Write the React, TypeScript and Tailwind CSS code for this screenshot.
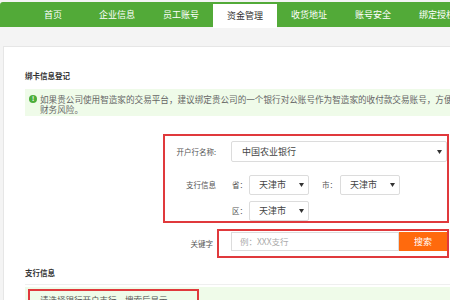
const FONT = { fontFamily: '"Noto Sans CJK SC", "Noto Sans", sans-serif' };

const tabs = ["首页", "企业信息", "员工账号", "资金管理", "收货地址", "账号安全", "绑定授权"];

function Caret() {
  return (
    <svg width="5" height="4" viewBox="0 0 5 4" className="shrink-0">
      <path d="M0 0h5L2.5 4z" fill="#333" />
    </svg>
  );
}

function Select({ value, className }: { value: string; className: string }) {
  return (
    <div
      className={`flex items-center justify-between bg-white border border-[#dcdcdc] rounded-[2px] pl-[9px] pr-[4px] text-[9px] text-[#444] ${className}`}
    >
      <span>{value}</span>
      <Caret />
    </div>
  );
}

export default function App() {
  return (
    <div className="w-[450px] h-[300px] overflow-hidden bg-[#f4f4f4] pt-[2px]" style={FONT}>
      {/* top nav */}
      <div className="h-[25px] bg-[#52aa38] rounded-tl-[3px] flex items-end pl-[21px] whitespace-nowrap">
        {tabs.map((t) =>
          t === "资金管理" ? (
            <div
              key={t}
              className="w-[64px] h-[24px] shrink-0 bg-white text-[#333] text-[9px] flex items-center justify-center translate-y-[1px]"
            >
              {t}
            </div>
          ) : (
            <div key={t} className="w-[64px] h-[25px] shrink-0 text-white text-[9px] flex items-center justify-center">
              {t}
            </div>
          )
        )}
      </div>

      <div className="h-[19px]" />

      {/* panel */}
      <div className="ml-[3px] w-[520px] h-[260px] bg-white border-l border-t border-[#e6e6e6] pl-[21px] pt-[22px]">
        <div className="text-[7.5px] font-bold text-[#333] leading-[14px]">绑卡信息登记</div>

        <div className="mt-[6px] h-[27px] bg-[#effbe9] pl-[4px] pt-[5px] flex items-start text-[8.6px] text-[#666] leading-[10px]">
          <div className="w-[8px] h-[8px] mt-[1px] rounded-full bg-[#4cae3c] flex items-center justify-center shrink-0">
            <span className="text-white text-[6px] font-bold leading-none">!</span>
          </div>
          <div className="ml-[3px] whitespace-nowrap">
            <div>如果贵公司使用智造家的交易平台，建议绑定贵公司的一个银行对公账号作为智造家的收付款交易账号，方便您</div>
            <div>财务风险。</div>
          </div>
        </div>

        {/* bank box */}
        <div className="mt-[18px] ml-[138px] w-[286px] h-[89px] border-2 border-[#e0393c] pt-[5px] text-[7.5px] text-[#555]">
          <div className="flex items-center">
            <div className="w-[51px] text-right">开户行名称:</div>
            <Select value="中国农业银行" className="ml-[15px] w-[216px] h-[21px] pl-[10px]" />
          </div>
          <div className="flex items-center mt-[13px]">
            <div className="w-[51px] text-right">支行信息</div>
            <span className="ml-[16px] w-[17px]">省：</span>
            <Select value="天津市" className="w-[60px] h-[20px]" />
            <span className="ml-[13px] w-[18px]">市：</span>
            <Select value="天津市" className="w-[60px] h-[20px]" />
          </div>
          <div className="flex items-center mt-[6px]">
            <div className="w-[51px]" />
            <span className="ml-[16px] w-[17px]">区：</span>
            <Select value="天津市" className="w-[60px] h-[20px]" />
          </div>
        </div>

        {/* keyword */}
        <div className="mt-[6px] ml-[138px] flex items-start text-[7.5px] text-[#555]">
          <div className="w-[50px] text-right mt-[9px]">关键字</div>
          <div className="ml-[4px] w-[232px] h-[29px] border-2 border-[#e0393c] pl-[12px] pt-[1px] flex">
            <div className="w-[169px] h-[19px] border border-[#dcdcdc] bg-white flex items-center pl-[8px] text-[8.5px] text-[#aaa]">
              例：XXX支行
            </div>
            <div className="w-[48px] h-[19px] bg-[#ff6a0d] text-white text-[9px] flex items-center justify-center">搜索</div>
          </div>
        </div>

        <div className="mt-[8px] text-[7.5px] font-bold text-[#333] leading-[14px]">支行信息</div>
        <div className="mt-[4px] border-t border-[#efefef]" />
        <div className="mt-[2px] h-[30px] bg-[#effbe9] pl-[3px] pt-[2px]">
          <div className="w-[171px] h-[20px] border-2 border-[#e0393c] pl-[10px] text-[8.5px] text-[#555] flex items-center">
            请选择银行开户支行，搜索后显示
          </div>
        </div>
      </div>
    </div>
  );
}
